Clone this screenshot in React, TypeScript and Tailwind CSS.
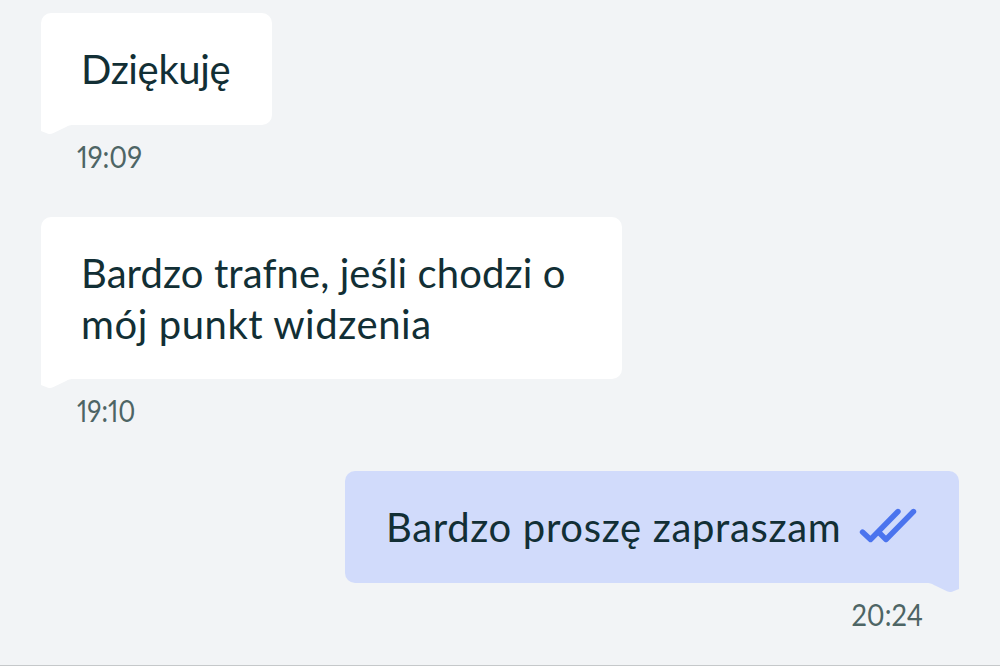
import clsx from "clsx";

interface Line {
  text: string;
  tracking: string;
}

interface Message {
  id: number;
  lines: Line[];
  time: string;
  timeScale: string;
  own?: boolean;
  size: string;
}

const MESSAGES: Message[] = [
  {
    id: 1,
    lines: [{ text: "Dziękuję", tracking: "tracking-[-0.35px]" }],
    time: "19:09",
    timeScale: "origin-left scale-x-[0.905]",
    size: "w-[231px] h-28",
  },
  {
    id: 2,
    lines: [
      { text: "Bardzo trafne, jeśli chodzi o", tracking: "tracking-[0.1px]" },
      { text: "mój punkt widzenia", tracking: "tracking-[0.56px]" },
    ],
    time: "19:10",
    timeScale: "origin-left scale-x-[0.865]",
    size: "w-[581px] h-[162px]",
  },
  {
    id: 3,
    lines: [{ text: "Bardzo proszę zapraszam", tracking: "tracking-[0.66px]" }],
    time: "20:24",
    timeScale: "origin-right scale-x-[0.905]",
    own: true,
    size: "w-[614px] h-28",
  },
];

function Tail({ own }: { own?: boolean }) {
  return (
    <svg
      viewBox="0 0 32 20"
      aria-hidden
      className={clsx(
        "absolute -bottom-[10px] h-5 w-8",
        own ? "right-0 -scale-x-100 fill-[#d1dbfb]" : "left-0 fill-white"
      )}
    >
      <path d="M0 0H32V10C28 10 27 11 24 12.5L12 18.3Q9.500 19.6 7 18.800L0 16Z" />
    </svg>
  );
}

function ReadIcon() {
  return (
    <svg
      viewBox="0 0 58 36"
      fill="none"
      stroke="currentColor"
      strokeWidth="5.4"
      strokeLinecap="round"
      strokeLinejoin="round"
      aria-label="Przeczytano"
      className="h-9 w-[58px] shrink-0 text-[#4b74ee]"
    >
      <path d="M3.500 24L11.500 31.500L39 3.500" />
      <path d="M20.500 25L27 31.500L54.500 3.500" />
    </svg>
  );
}

function Bubble({ message }: { message: Message }) {
  const { lines, time, timeScale, own, size } = message;

  return (
    <article className={clsx("flex flex-col", own ? "items-end" : "items-start")}>
      <div
        className={clsx(
          "relative flex items-start justify-between rounded-[10px] pt-[31px]",
          size,
          own
            ? "rounded-br-none bg-[#d1dbfb] pr-[42px] pl-[41px]"
            : "rounded-bl-none bg-white pl-10"
        )}
      >
        <div className="text-[40px] leading-[51px] text-[#122f35]">
          {lines.map((line) => (
            <p key={line.text} className={clsx("whitespace-nowrap", line.tracking)}>
              {line.text}
            </p>
          ))}
        </div>
        {own && (
          <div className="pt-1.5">
            <ReadIcon />
          </div>
        )}
        <Tail own={own} />
      </div>
      <time
        className={clsx(
          "mt-[13px] text-[30px] leading-9 text-[#4e6565] proportional-nums",
          timeScale,
          own ? "mr-9" : "ml-9"
        )}
      >
        {time}
      </time>
    </article>
  );
}

export default function App() {
  return (
    <main className="flex h-[666px] w-[1000px] flex-col gap-[43px] overflow-hidden border-b border-[#c5c8ca] bg-[#f2f4f6] px-[41px] pt-[13px] font-['Lato',sans-serif]">
      {MESSAGES.map((message) => (
        <Bubble key={message.id} message={message} />
      ))}
    </main>
  );
}
